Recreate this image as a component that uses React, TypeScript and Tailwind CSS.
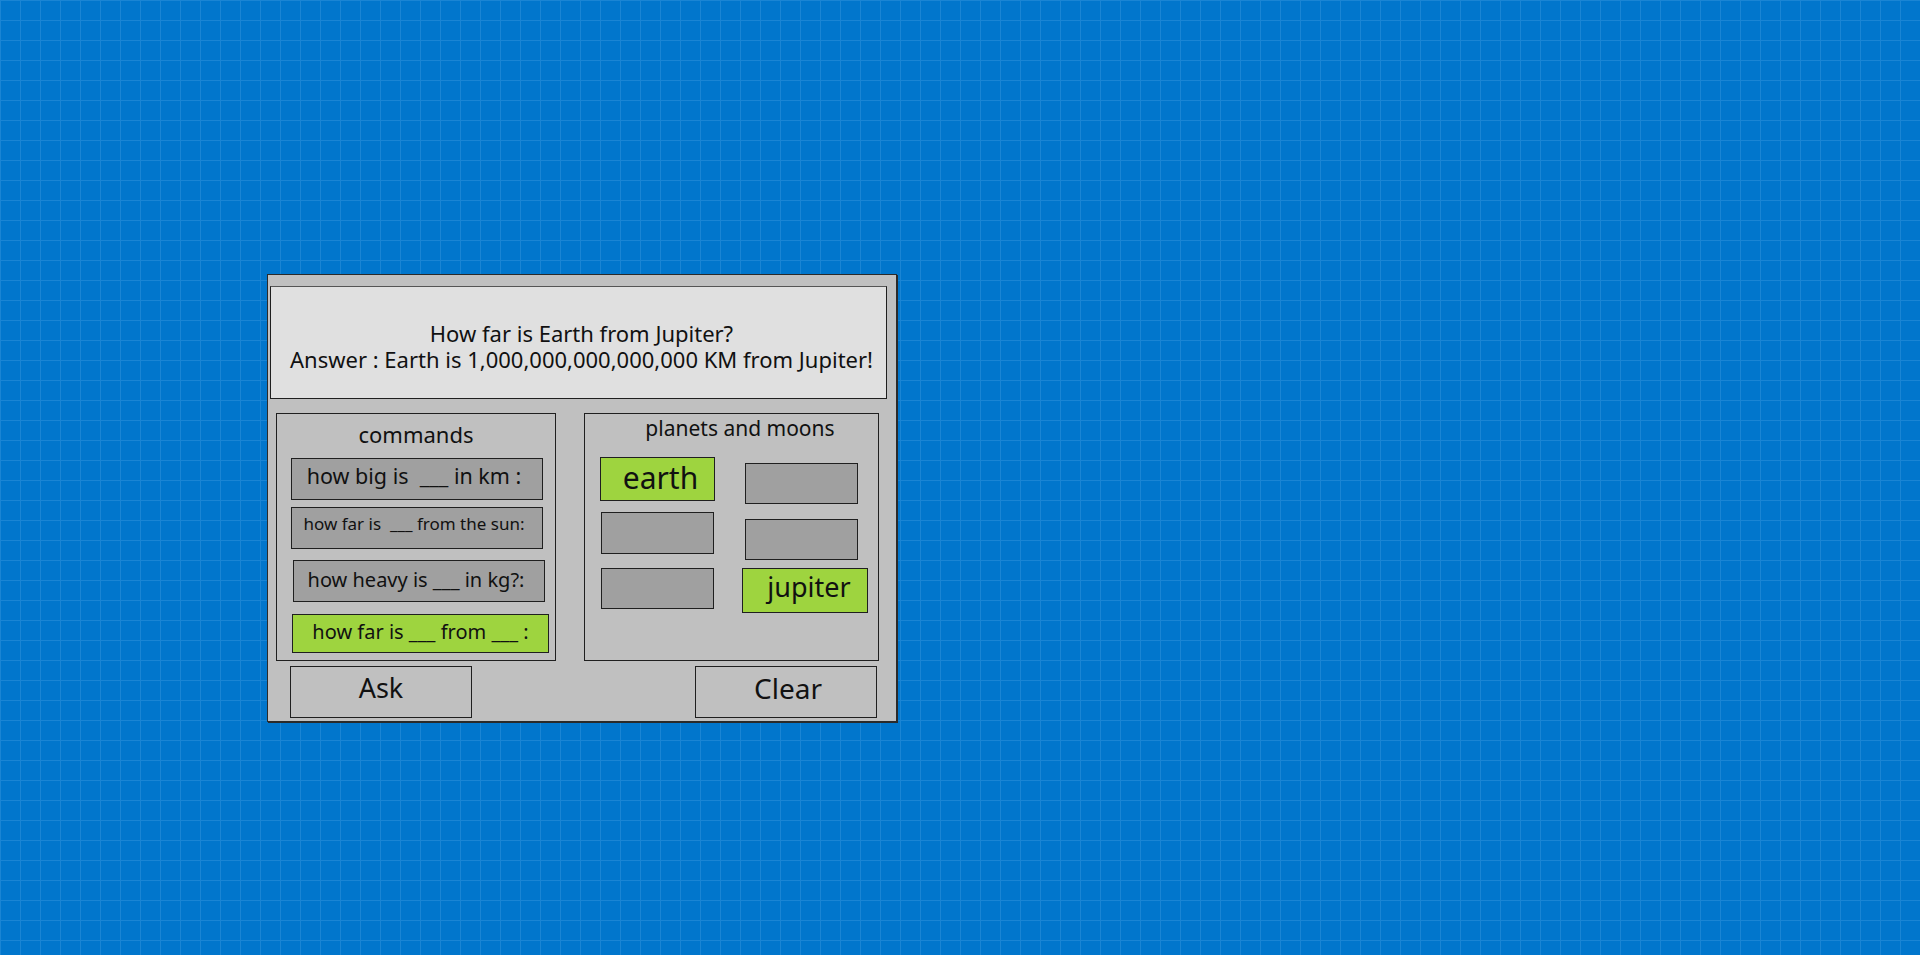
import React from 'react';

const font = { fontFamily: '"Noto Sans", "Open Sans", sans-serif' };

function CommandButton({ label, className, textClass }: { label: string; className: string; textClass: string }) {
  return (
    <div className={`flex items-center justify-center border border-[#1f1f1f] text-[#111] ${className}`}>
      <span className={`whitespace-pre ${textClass}`}>{label}</span>
    </div>
  );
}

function Slot({ label, className, textClass }: { label?: string; className: string; textClass?: string }) {
  return (
    <div className={`flex items-center justify-center border border-[#1f1f1f] text-[#111] ${className}`}>
      {label && <span className={textClass}>{label}</span>}
    </div>
  );
}

export default function App() {
  return (
    <div
      className="h-screen w-full overflow-hidden bg-[#0176cc] bg-[linear-gradient(to_right,#1a85d4_1px,transparent_1px),linear-gradient(to_bottom,#1a85d4_1px,transparent_1px)] bg-[size:20px_20px] pl-[267px] pt-[274px]"
      style={font}
    >
      <div className="flex h-[448px] w-[630px] flex-col border border-[#2a2a2a] bg-[#c0c0c0] shadow-[1px_1px_0_#2a2a2a]">
        {/* answer display */}
        <div className="ml-[2px] mt-[11px] flex h-[113px] w-[617px] flex-col items-center justify-center border border-[#1f1f1f] border-t-[#555] bg-[#e0e0e0] pl-[6px] pt-[6px] text-[22px] leading-[26px] text-[#111]">
          <span>How far is Earth from Jupiter?</span>
          <span>Answer : Earth is 1,000,000,000,000,000 KM from Jupiter!</span>
        </div>

        <div className="ml-[8px] mt-[14px] flex gap-[28px]">
          {/* commands */}
          <div className="flex h-[248px] w-[280px] flex-col border border-[#1f1f1f]">
            <div className="h-[44px] pt-[6px] text-center text-[22px] leading-[28px] text-[#111]">commands</div>
            <CommandButton
              label="how big is  ___ in km :"
              className="ml-[14px] h-[42px] w-[252px] bg-[#a0a0a0] pb-[5px] pr-[6px]"
              textClass="text-[21.5px]"
            />
            <CommandButton
              label="how far is  ___ from the sun:"
              className="ml-[14px] mt-[7px] h-[42px] w-[252px] bg-[#a0a0a0] pb-[9px] pr-[6px]"
              textClass="text-[17px]"
            />
            <CommandButton
              label="how heavy is ___ in kg?:"
              className="ml-[16px] mt-[11px] h-[42px] w-[252px] bg-[#a0a0a0] pb-[3px] pr-[6px]"
              textClass="text-[20px]"
            />
            <CommandButton
              label="how far is ___ from ___ :"
              className="ml-[15px] mt-[12px] h-[39px] w-[257px] bg-[#9ed43f] pb-[4px]"
              textClass="text-[20px]"
            />
          </div>

          {/* planets and moons */}
          <div className="flex h-[248px] w-[295px] flex-col border border-[#1f1f1f]">
            <div className="pl-[17px] text-center text-[21px] leading-[28px] text-[#111]">planets and moons</div>
            <div className="flex">
              <div className="ml-[15px] mt-[15px] flex flex-col">
                <Slot label="earth" className="h-[44px] w-[115px] bg-[#9ed43f] pb-[4px] pl-[6px]" textClass="text-[30px]" />
                <Slot className="ml-[1px] mt-[11px] h-[42px] w-[113px] bg-[#a0a0a0]" />
                <Slot className="ml-[1px] mt-[14px] h-[41px] w-[113px] bg-[#a0a0a0]" />
              </div>
              <div className="ml-[27px] mt-[21px] flex flex-col">
                <Slot className="ml-[3px] h-[41px] w-[113px] bg-[#a0a0a0]" />
                <Slot className="ml-[3px] mt-[15px] h-[41px] w-[113px] bg-[#a0a0a0]" />
                <Slot label="jupiter" className="mt-[8px] h-[45px] w-[126px] bg-[#9ed43f] pb-[7px] pl-[8px]" textClass="text-[27px]" />
              </div>
            </div>
          </div>
        </div>

        <div className="ml-[22px] mr-[19px] mt-[5px] flex justify-between">
          <button className="flex h-[52px] w-[182px] items-center justify-center border border-[#1f1f1f] bg-[#c0c0c0] pb-[7px] text-[27px] text-[#111]">
            Ask
          </button>
          <button className="flex h-[52px] w-[182px] items-center justify-center border border-[#1f1f1f] bg-[#c0c0c0] pb-[8px] pl-[4px] text-[28px] text-[#111]">
            Clear
          </button>
        </div>
      </div>
    </div>
  );
}
